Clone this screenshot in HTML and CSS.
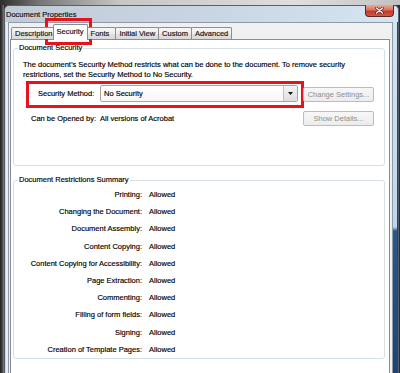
FILE: index.html
```html
<!DOCTYPE html>
<html>
<head>
<meta charset="utf-8">
<link rel="stylesheet" href="styles.css">
</head>
<body>
<div class="screen">
  <div class="topstrip"></div>
  <div class="desk">
    <div class="leftstrip"></div>
    <div class="window">
      <div class="titlebar">
        <span class="title">Document Properties</span>
        <span class="close"><svg width="9" height="7" viewBox="0 0 9 7"><path d="M1.5 1 L7.5 6 M7.5 1 L1.5 6" stroke="#4a1c18" stroke-width="2.6" stroke-linecap="round"/><path d="M1.5 1 L7.5 6 M7.5 1 L1.5 6" stroke="#ffffff" stroke-width="1.3" stroke-linecap="round"/></svg></span>
      </div>
      <div class="wbody">
        <div class="lframe"></div>
        <div class="client">
          <div class="tabs">
            <div class="tab first">Description</div>
            <div class="tab sel">Security</div>
            <div class="tab after">Fonts</div>
            <div class="tab">Initial View</div>
            <div class="tab">Custom</div>
            <div class="tab">Advanced</div>
          </div>
          <div class="panel">
            <fieldset class="group g1">
              <legend>Document Security</legend>
              <div class="g1body">
                <p class="desc">The document’s Security Method restricts what can be done to the document. To remove security restrictions, set the Security Method to No Security.</p>
                <div class="secgrid">
                  <div class="redbox">
                    <span class="lbl-method">Security Method:</span>
                    <div class="select"><span class="sel-text">No Security</span><span class="sel-btn"><svg width="5" height="3" viewBox="0 0 5 3"><path d="M0 0 H5 L2.5 3 Z" fill="#111"/></svg></span></div>
                  </div>
                  <div class="btn">Change Settings...</div>
                  <div class="opened"><span class="lbl-open">Can be Opened by:</span><span>All versions of Acrobat</span></div>
                  <div class="btn btn2">Show Details...</div>
                </div>
              </div>
            </fieldset>
            <fieldset class="group g2">
              <legend>Document Restrictions Summary</legend>
              <div class="rows">
                <span class="k">Printing:</span><span>Allowed</span>
                <span class="k">Changing the Document:</span><span>Allowed</span>
                <span class="k">Document Assembly:</span><span>Allowed</span>
                <span class="k">Content Copying:</span><span>Allowed</span>
                <span class="k">Content Copying for Accessibility:</span><span>Allowed</span>
                <span class="k">Page Extraction:</span><span>Allowed</span>
                <span class="k">Commenting:</span><span>Allowed</span>
                <span class="k">Filling of form fields:</span><span>Allowed</span>
                <span class="k">Signing:</span><span>Allowed</span>
                <span class="k">Creation of Template Pages:</span><span>Allowed</span>
              </div>
            </fieldset>
          </div>
        </div>
        <div class="rframe"></div>
      </div>
    </div>
    <div class="rightstrip"></div>
  </div>
  <div class="mark-tab"></div>
</div>
</body>
</html>
```

FILE: styles.css
```css
* { box-sizing: border-box; }
html, body { margin: 0; padding: 0; }
body {
  width: 400px;
  height: 373px;
  overflow: hidden;
  background: #2b2b2b;
  font-family: "Liberation Sans", Arial, sans-serif;
  font-size: 7.5px;
  color: #000;
  -webkit-text-stroke: 0.15px currentColor;
}
.screen {
  position: relative;
  width: 400px;
  height: 373px;
  display: flex;
  flex-direction: column;
}
.topstrip {
  height: 5px;
  background: linear-gradient(to right, #2e2e2e 0, #777 40px, #c6c6c6 120px, #dedede 300px, #c2c2c2 400px);
}
.desk { flex: 1; display: flex; min-height: 0; }
.leftstrip {
  width: 4px;
  background: linear-gradient(to right, #1f1f1f, #3e3e3e 2px, #7c7c7c);
}
.window {
  width: 395px;
  display: flex;
  flex-direction: column;
  border: 1px solid #56616d;
  border-bottom: none;
  border-radius: 5px 5px 0 0;
  background: linear-gradient(to right, #c1cbd6, #c9d6e3 55%, #d6e5f3);
}
.titlebar {
  height: 16px;
  display: flex;
  justify-content: space-between;
  align-items: center;
}
.title { padding-left: 1px; color: #0e0e0e; }
.close {
  align-self: flex-start;
  width: 29px;
  height: 12px;
  margin-top: -1px;
  margin-right: 4px;
  border: 1px solid #5a2822;
  border-top: none;
  border-radius: 0 0 4px 4px;
  background: linear-gradient(#eaa899, #d9735f 45%, #c2392a 55%, #d3583f);
  display: flex;
  align-items: center;
  justify-content: center;
}
.close svg { display: block; }
.wbody { flex: 1; display: flex; min-height: 0; }
.lframe {
  width: 3px;
  background: linear-gradient(to right, #a9b3bd, #eef2f6 1px, #e3e8ee);
}
.client {
  width: 385px;
  background: #f0f0f0;
  border: 1px solid #8e9baa;
  border-bottom: none;
  padding: 1px 2px 0 1px;
  display: flex;
  flex-direction: column;
}
.rframe {
  width: 5px;
  background: linear-gradient(to bottom, #d4e4f3 0, #bfd6ec 205px, #2c5789 209px, #1e4373 100%);
  border-right: 1px solid #3b4450;
}
.rightstrip { width: 1px; background: #2a2a2a; }

/* tabs */
.tabs {
  height: 15px;
  display: flex;
  align-items: flex-end;
  padding-left: 1px;
  position: relative;
  z-index: 1;
}
.tab {
  height: 12px;
  line-height: 11px;
  padding: 0 3px;
  margin-left: -1px;
  border: 1px solid #8a8d94;
  border-bottom: none;
  border-radius: 2px 2px 0 0;
  background: linear-gradient(#f7f7f7, #ececec 50%, #e1e1e1 51%, #d9d9d9);
  color: #111;
}
.tab.first { margin-left: 0; padding-right: 2px; }
.tab.sel {
  height: 16px;
  line-height: 14px;
  padding: 0 3px;
  margin: 0 -2px -1px -3px;
  background: #fff;
  position: relative;
  z-index: 2;
}
.tab.after { padding: 0 6px 0 5px; }
.panel {
  flex: 1;
  background: #fff;
  border: 1px solid #898c95;
  border-bottom: none;
  padding: 3px 4px 0 2px;
}

/* group boxes */
.group {
  margin: 0;
  border: 1px solid #d5dfe5;
  border-radius: 3px;
  padding: 0 0 0 4px;
  min-width: 0;
}
.group legend {
  padding: 0 1px;
  line-height: 10px;
}
.g1body { padding: 7px 0 39px 5px; }
.desc {
  margin: 0;
  line-height: 9.5px;
  width: 330px;
}
.secgrid {
  margin-top: 2px;
  display: grid;
  grid-template-columns: 278px 71px;
  column-gap: 2px;
  align-items: center;
}
.redbox {
  margin-left: 3px;
  width: 278px;
  height: 27px;
  border: 3px solid #e5141c;
  padding: 0 3px 3px 9px;
  display: flex;
  align-items: center;
}
.lbl-method { width: 62px; }
.select {
  flex: 1;
  height: 17px;
  border: 1px solid #a6a6a6;
  border-radius: 2px;
  background: linear-gradient(#ffffff, #f7f7f7);
  display: flex;
  align-items: center;
  justify-content: space-between;
  padding-left: 3px;
}
.sel-btn {
  width: 14px;
  height: 15px;
  border-left: 1px solid #c4c4c4;
  background: linear-gradient(#f4f4f4, #dedede);
  display: flex;
  align-items: center;
  justify-content: center;
}
.sel-btn svg { display: block; }
.btn {
  height: 15px;
  border: 1px solid #bcbcbc;
  border-radius: 2px;
  background: linear-gradient(#f7f7f7, #ececec);
  color: #8e8e8e;
  -webkit-text-stroke: 0;
  display: flex;
  align-items: center;
  justify-content: center;
}
.btn2 { margin-top: 3px; }
.opened { margin: 3px 0 0 8px; display: flex; }
.lbl-open { width: 69px; }

.g2 { margin-top: 9px; }
.rows {
  padding-top: 1px;
  display: grid;
  grid-template-columns: 124px auto;
  column-gap: 7px;
  grid-auto-rows: 17.2px;
  align-items: center;
}
.k { text-align: right; }

.mark-tab {
  position: absolute;
  left: 45px;
  top: 18px;
  width: 47px;
  height: 27px;
  border: 3px solid #e5141c;
}
```
